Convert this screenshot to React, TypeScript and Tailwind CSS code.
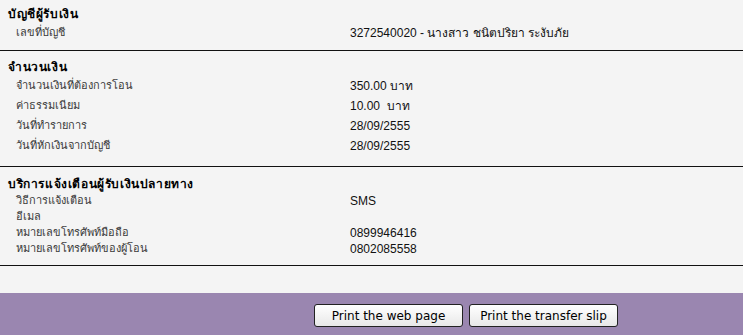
import React from "react";

const font = { fontFamily: '"DejaVu Sans", Tahoma, "Noto Sans", sans-serif' };

function Row({ label, value, h }: { label: string; value?: React.ReactNode; h: string }) {
  return (
    <div className={`flex items-center ${h}`}>
      <div className="w-[350px] pl-[16px] text-[11px] text-[#3a3a3a]">{label}</div>
      <div className="text-[12px] text-[#111] font-['Liberation_Sans',Arial,sans-serif]">{value}</div>
    </div>
  );
}

function Heading({ children }: { children: React.ReactNode }) {
  return (
    <div className="h-[18px] flex items-center pl-[8px] text-[12px] tracking-[0.6px] font-bold text-black">
      {children}
    </div>
  );
}

export default function App() {
  return (
    <div className="w-[743px] h-[335px] bg-[#f4f4f4] flex flex-col" style={font}>
      <div className="pt-[5px] pb-[7px] border-b border-[#111]">
        <Heading>บัญชีผู้รับเงิน</Heading>
        <Row h="h-[20px]" label="เลขที่บัญชี" value="3272540020 - นางสาว ชนิตปริยา ระงับภัย" />
      </div>
      <div className="pt-[7px] pb-[10px] border-b border-[#111]">
        <Heading>จำนวนเงิน</Heading>
        <Row h="h-[20px]" label="จำนวนเงินที่ต้องการโอน" value="350.00 บาท" />
        <Row h="h-[20px]" label="ค่าธรรมเนียม" value={"10.00\u00a0 บาท"} />
        <Row h="h-[20px]" label="วันที่ทำรายการ" value="28/09/2555" />
        <Row h="h-[20px]" label="วันที่หักเงินจากบัญชี" value="28/09/2555" />
      </div>
      <div className="pt-[8px] pb-[8px] border-b border-[#111]">
        <Heading>บริการแจ้งเตือนผู้รับเงินปลายทาง</Heading>
        <Row h="h-[16px]" label="วิธีการแจ้งเตือน" value="SMS" />
        <Row h="h-[16px]" label="อีเมล" value="" />
        <Row h="h-[16px]" label="หมายเลขโทรศัพท์มือถือ" value="0899946416" />
        <Row h="h-[16px]" label="หมายเลขโทรศัพท์ของผู้โอน" value="0802085558" />
      </div>
      <div className="h-[27px]" />
      <div className="flex-1 bg-[#9a86b0] pt-[11px] pl-[314px] flex gap-[6px] items-start">
        <button className="w-[149px] h-[23px] border border-[#222] rounded-[3px] bg-gradient-to-b from-white to-[#e8e8e8] text-[12px] text-black">
          Print the web page
        </button>
        <button className="w-[149px] h-[23px] border border-[#222] rounded-[3px] bg-gradient-to-b from-white to-[#e8e8e8] text-[12px] text-black">
          Print the transfer slip
        </button>
      </div>
    </div>
  );
}
